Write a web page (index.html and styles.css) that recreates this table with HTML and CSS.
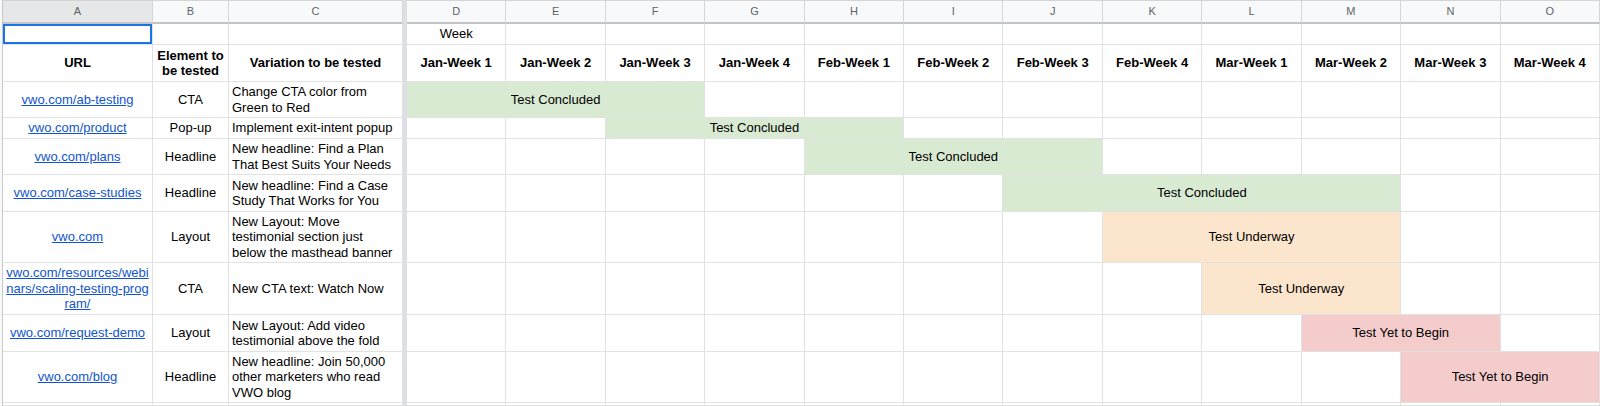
FILE: index.html
```html
<!DOCTYPE html>
<html lang="en">
<head>
<meta charset="utf-8">
<title>A/B Testing Roadmap</title>
<link rel="stylesheet" href="styles.css">
</head>
<body>
<div class="sheet">
  <div class="rowhead"></div>
  <div class="freeze"></div>

  <div class="cell colhead colsel">A</div>
  <div class="cell colhead">B</div>
  <div class="cell colhead">C</div>
  <div class="cell colhead">D</div>
  <div class="cell colhead">E</div>
  <div class="cell colhead">F</div>
  <div class="cell colhead">G</div>
  <div class="cell colhead">H</div>
  <div class="cell colhead">I</div>
  <div class="cell colhead">J</div>
  <div class="cell colhead">K</div>
  <div class="cell colhead">L</div>
  <div class="cell colhead">M</div>
  <div class="cell colhead">N</div>
  <div class="cell colhead">O</div>

  <div class="cell selcell"></div>
  <div class="cell"></div>
  <div class="cell"></div>
  <div class="cell"><span>Week</span></div>
  <div class="cell"></div><div class="cell"></div><div class="cell"></div><div class="cell"></div><div class="cell"></div><div class="cell"></div><div class="cell"></div><div class="cell"></div><div class="cell"></div><div class="cell"></div><div class="cell"></div>

  <div class="cell b"><span>URL</span></div>
  <div class="cell b"><span>Element to<br>be tested</span></div>
  <div class="cell b"><span>Variation to be tested</span></div>
  <div class="cell b"><span>Jan-Week 1</span></div>
  <div class="cell b"><span>Jan-Week 2</span></div>
  <div class="cell b"><span>Jan-Week 3</span></div>
  <div class="cell b"><span>Jan-Week 4</span></div>
  <div class="cell b"><span>Feb-Week 1</span></div>
  <div class="cell b"><span>Feb-Week 2</span></div>
  <div class="cell b"><span>Feb-Week 3</span></div>
  <div class="cell b"><span>Feb-Week 4</span></div>
  <div class="cell b"><span>Mar-Week 1</span></div>
  <div class="cell b"><span>Mar-Week 2</span></div>
  <div class="cell b"><span>Mar-Week 3</span></div>
  <div class="cell b"><span>Mar-Week 4</span></div>

  <div class="cell"><a href="#">vwo.com/ab-testing</a></div>
  <div class="cell"><span>CTA</span></div>
  <div class="cell left"><span>Change CTA color from<br>Green to Red</span></div>
  <div class="cell bar green span3"><span>Test Concluded</span></div>
  <div class="cell"></div><div class="cell"></div><div class="cell"></div><div class="cell"></div><div class="cell"></div><div class="cell"></div><div class="cell"></div><div class="cell"></div><div class="cell"></div>

  <div class="cell"><a href="#">vwo.com/product</a></div>
  <div class="cell"><span>Pop-up</span></div>
  <div class="cell left"><span>Implement exit-intent popup</span></div>
  <div class="cell"></div><div class="cell"></div>
  <div class="cell bar green span3"><span>Test Concluded</span></div>
  <div class="cell"></div><div class="cell"></div><div class="cell"></div><div class="cell"></div><div class="cell"></div><div class="cell"></div><div class="cell"></div>

  <div class="cell"><a href="#">vwo.com/plans</a></div>
  <div class="cell"><span>Headline</span></div>
  <div class="cell left"><span>New headline: Find a Plan<br>That Best Suits Your Needs</span></div>
  <div class="cell"></div><div class="cell"></div><div class="cell"></div><div class="cell"></div>
  <div class="cell bar green span3"><span>Test Concluded</span></div>
  <div class="cell"></div><div class="cell"></div><div class="cell"></div><div class="cell"></div><div class="cell"></div>

  <div class="cell"><a href="#">vwo.com/case-studies</a></div>
  <div class="cell"><span>Headline</span></div>
  <div class="cell left"><span>New headline: Find a Case<br>Study That Works for You</span></div>
  <div class="cell"></div><div class="cell"></div><div class="cell"></div><div class="cell"></div><div class="cell"></div><div class="cell"></div>
  <div class="cell bar green span4"><span>Test Concluded</span></div>
  <div class="cell"></div><div class="cell"></div>

  <div class="cell"><a href="#">vwo.com</a></div>
  <div class="cell"><span>Layout</span></div>
  <div class="cell left"><span>New Layout: Move<br>testimonial section just<br>below the masthead banner</span></div>
  <div class="cell"></div><div class="cell"></div><div class="cell"></div><div class="cell"></div><div class="cell"></div><div class="cell"></div><div class="cell"></div>
  <div class="cell bar orange span3"><span>Test Underway</span></div>
  <div class="cell"></div><div class="cell"></div>

  <div class="cell"><a href="#">vwo.com/resources/webi<br>nars/scaling-testing-prog<br>ram/</a></div>
  <div class="cell"><span>CTA</span></div>
  <div class="cell left"><span>New CTA text: Watch Now</span></div>
  <div class="cell"></div><div class="cell"></div><div class="cell"></div><div class="cell"></div><div class="cell"></div><div class="cell"></div><div class="cell"></div><div class="cell"></div>
  <div class="cell bar orange span2"><span>Test Underway</span></div>
  <div class="cell"></div><div class="cell"></div>

  <div class="cell"><a href="#">vwo.com/request-demo</a></div>
  <div class="cell"><span>Layout</span></div>
  <div class="cell left"><span>New Layout: Add video<br>testimonial above the fold</span></div>
  <div class="cell"></div><div class="cell"></div><div class="cell"></div><div class="cell"></div><div class="cell"></div><div class="cell"></div><div class="cell"></div><div class="cell"></div><div class="cell"></div>
  <div class="cell bar pink span2"><span>Test Yet to Begin</span></div>
  <div class="cell"></div>

  <div class="cell"><a href="#">vwo.com/blog</a></div>
  <div class="cell"><span>Headline</span></div>
  <div class="cell left"><span>New headline: Join 50,000<br>other marketers who read<br>VWO blog</span></div>
  <div class="cell"></div><div class="cell"></div><div class="cell"></div><div class="cell"></div><div class="cell"></div><div class="cell"></div><div class="cell"></div><div class="cell"></div><div class="cell"></div><div class="cell"></div>
  <div class="cell bar pink span2"><span>Test Yet to Begin</span></div>

  <div class="cell"></div><div class="cell"></div><div class="cell"></div>
  <div class="cell"></div><div class="cell"></div><div class="cell"></div><div class="cell"></div><div class="cell"></div><div class="cell"></div><div class="cell"></div><div class="cell"></div><div class="cell"></div><div class="cell"></div><div class="cell"></div><div class="cell"></div>
</div>
</body>
</html>
```

FILE: styles.css
```css
html, body {
  margin: 0;
  padding: 0;
  background: #ffffff;
}

body {
  font-family: "Liberation Sans", Arial, sans-serif;
  font-size: 13px;
  color: #000000;
}

.sheet {
  display: grid;
  grid-template-columns: 3px 150px 76px 174px 4px repeat(12, 1fr);
  grid-template-rows: 24px 21px 37px 36px 21px 36px 37px 51px 52px 37px 51px 3px;
  width: 1600px;
  height: 406px;
  overflow: hidden;
}

.rowhead {
  grid-column: 1;
  grid-row: 1 / -1;
  background: #f8f9fa;
  border-right: 1px solid #c7c7c7;
  box-sizing: border-box;
}

.freeze {
  grid-column: 5;
  grid-row: 1 / -1;
  background: #dcdfe4;
}

.cell {
  box-sizing: border-box;
  border-right: 1px solid #e2e2e2;
  border-bottom: 1px solid #e2e2e2;
  display: flex;
  align-items: center;
  justify-content: center;
  text-align: center;
  padding: 0 3px;
  line-height: 15.5px;
  white-space: nowrap;
  overflow: hidden;
  min-width: 0;
}

.cell.left {
  justify-content: flex-start;
  text-align: left;
}

.colhead {
  background: #f8f9fa;
  color: #5f6368;
  font-size: 11px;
  border-top: 1px solid #d4d4d4;
  border-right-color: #d7d7d7;
  border-bottom: 2px solid #c4c4c4;
  padding-top: 1px;
}

.colhead.colsel {
  background: #e6e7e9;
}

.selcell {
  box-shadow: inset 0 0 0 2px #1a73e8;
}

.b {
  font-weight: bold;
}

.cell a {
  color: #1155cc;
  text-decoration: underline;
}

.bar.green {
  background: #d9ead3;
}

.bar.orange {
  background: #fce5cd;
}

.bar.pink {
  background: #f4cccc;
}

.span2 {
  grid-column: span 2;
}

.span3 {
  grid-column: span 3;
}

.span4 {
  grid-column: span 4;
}
```
